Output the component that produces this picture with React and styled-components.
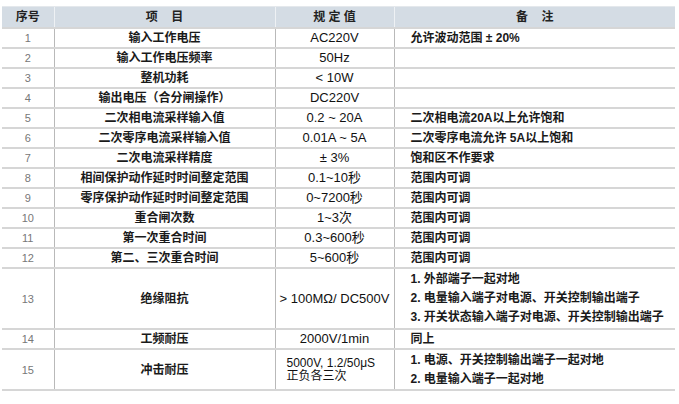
import React from "react";
import styled, { createGlobalStyle } from "styled-components";

const Global = createGlobalStyle`
  html, body { margin: 0; padding: 0; background: #fff; }
  body { font-family: "Liberation Sans", "Noto Sans CJK SC", sans-serif; }
`;

const Wrap = styled.div`
  padding: 6px 4px 0 2px;
`;

const Table = styled.table`
  width: 673px;
  border-collapse: collapse;
  table-layout: fixed;
  font-size: 12px;
  color: #1e1e1e;
`;

const Head = styled.th`
  background: #d4dce4;
  height: 20px;
  padding: 0;
  font-weight: 700;
  font-size: 12px;
  line-height: 14px;
  color: #222;
  border-left: 1px solid #eef1f4;
  border-top: 1px solid #e4e8ec;
  white-space: pre;
  &:first-child { border-left: none; }
`;

const Row = styled.tr`
  border-top: 2px solid #d6d6d6;
  &:last-child { border-bottom: 2px solid #d6d6d6; }
`;

const Cell = styled.td`
  padding: 0;
  height: ${(p) => p.$h || 18}px;
  border-left: 1px solid #b9b9b9;
  vertical-align: middle;
  line-height: 14px;
  &:first-child { border-left: none; }
`;

const NumCell = styled(Cell)`
  text-align: center;
  color: #777;
  font-weight: 400;
  font-size: 11px;
`;

const ItemCell = styled(Cell)`
  text-align: center;
  font-weight: 700;
  color: #1a1a1a;
`;

const ValueCell = styled(Cell)`
  text-align: ${(p) => (p.$left ? "left" : "center")};
  padding-left: ${(p) => (p.$left ? "11px" : "0")};
  font-size: ${(p) => (p.$left ? "12px" : "13px")};
  line-height: 14px;
  color: #111;
`;

const ValueLine = styled.div`
  line-height: 13px;
  white-space: nowrap;
`;

const NoteCell = styled(Cell)`
  padding-left: 16px;
  font-weight: 700;
  color: #1a1a1a;
`;

const NoteLine = styled.div`
  line-height: ${(p) => p.$lh || 18}px;
`;

const rows = [
  ["1", "输入工作电压", "AC220V", ["允许波动范围 ± 20%"]],
  ["2", "输入工作电压频率", "50Hz", []],
  ["3", "整机功耗", "< 10W", []],
  ["4", "输出电压（合分闸操作）", "DC220V", []],
  ["5", "二次相电流采样输入值", "0.2 ~ 20A", ["二次相电流20A以上允许饱和"]],
  ["6", "二次零序电流采样输入值", "0.01A ~ 5A", ["二次零序电流允许 5A以上饱和"]],
  ["7", "二次电流采样精度", "± 3%", ["饱和区不作要求"]],
  ["8", "相间保护动作延时时间整定范围", "0.1~10秒", ["范围内可调"]],
  ["9", "零序保护动作延时时间整定范围", "0~7200秒", ["范围内可调"]],
  ["10", "重合闸次数", "1~3次", ["范围内可调"]],
  ["11", "第一次重合时间", "0.3~600秒", ["范围内可调"]],
  ["12", "第二、三次重合时间", "5~600秒", ["范围内可调"]],
  [
    "13",
    "绝缘阻抗",
    "> 100MΩ/ DC500V",
    ["1.  外部端子一起对地", "2.  电量输入端子对电源、开关控制输出端子", "3.  开关状态输入端子对电源、开关控制输出端子"],
    59,
    19,
  ],
  ["14", "工频耐压", "2000V/1min", ["同上"]],
  [
    "15",
    "冲击耐压",
    ["5000V, 1.2/50μS", "正负各三次"],
    ["1.  电源、开关控制输出端子一起对地", "2.  电量输入端子一起对地"],
    39,
    19,
  ],
];

export default function App() {
  return (
    <Wrap>
      <Global />
      <Table>
        <colgroup>
          <col style={{ width: 52 }} />
          <col style={{ width: 221 }} />
          <col style={{ width: 119 }} />
          <col style={{ width: 281 }} />
        </colgroup>
        <thead>
          <tr>
            <Head>序号</Head>
            <Head>{"项    目"}</Head>
            <Head>{"规 定 值"}</Head>
            <Head>{"备    注"}</Head>
          </tr>
        </thead>
        <tbody>
          {rows.map(([n, item, val, notes, h, lh]) => (
            <Row key={n}>
              <NumCell $h={h}>{n}</NumCell>
              <ItemCell $h={h}>{item}</ItemCell>
              {Array.isArray(val) ? (
                <ValueCell $h={h} $left>
                  {val.map((v) => (
                    <ValueLine key={v}>{v}</ValueLine>
                  ))}
                </ValueCell>
              ) : (
                <ValueCell $h={h}>{val}</ValueCell>
              )}
              <NoteCell $h={h}>
                {notes.map((t) => (
                  <NoteLine key={t} $lh={lh}>
                    {t}
                  </NoteLine>
                ))}
              </NoteCell>
            </Row>
          ))}
        </tbody>
      </Table>
    </Wrap>
  );
}
